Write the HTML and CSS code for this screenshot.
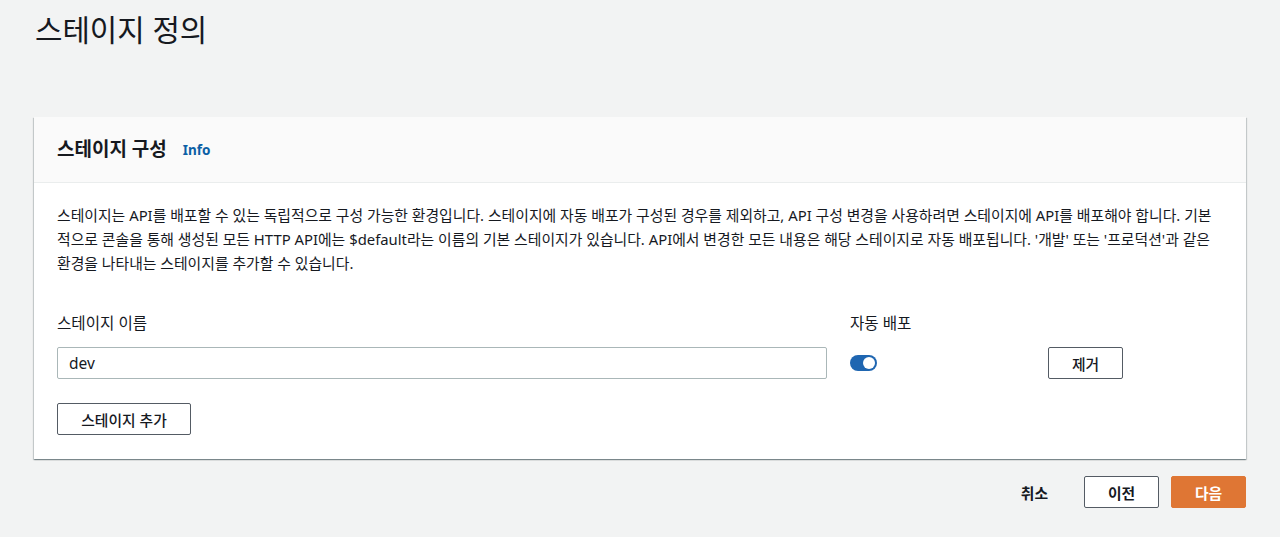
FILE: index.html
```html
<!DOCTYPE html>
<html lang="ko">
<head>
<meta charset="utf-8">
<title>스테이지 정의</title>
<link rel="stylesheet" href="styles.css">
</head>
<body>
<main class="page">
  <h1 class="page-title">스테이지 정의</h1>
  <section class="card">
    <header class="card-header">
      <h2 class="card-title">스테이지 구성</h2>
      <a class="info-link" href="#">Info</a>
    </header>
    <div class="card-body">
      <p class="desc">스테이지는 API를 배포할 수 있는 독립적으로 구성 가능한 환경입니다. 스테이지에 자동 배포가 구성된 경우를 제외하고, API 구성 변경을 사용하려면 스테이지에 API를 배포해야 합니다. 기본적으로 콘솔을 통해 생성된 모든 HTTP API에는 $default라는 이름의 기본 스테이지가 있습니다. API에서 변경한 모든 내용은 해당 스테이지로 자동 배포됩니다. '개발' 또는 '프로덕션'과 같은 환경을 나타내는 스테이지를 추가할 수 있습니다.</p>
      <div class="stage-grid">
        <label class="field-label">스테이지 이름</label>
        <label class="field-label">자동 배포</label>
        <span></span>
        <input class="text-input" type="text" value="dev">
        <div class="toggle-cell"><span class="toggle"><span class="knob"></span></span></div>
        <div><button class="btn btn-small">제거</button></div>
      </div>
      <button class="btn btn-add">스테이지 추가</button>
    </div>
  </section>
  <footer class="actions">
    <button class="btn-link">취소</button>
    <button class="btn btn-footer">이전</button>
    <button class="btn btn-primary">다음</button>
  </footer>
</main>
</body>
</html>
```

FILE: styles.css
```css
* { box-sizing: border-box; }
html, body {
  margin: 0;
  background: #f2f3f3;
  color: #16191f;
  font-family: "Noto Sans", "Noto Sans CJK KR", sans-serif;
  font-size: 14px;
}
.page {
  padding: 0 34px;
}
.page-title {
  margin: 0;
  padding-top: 12px;
  font-size: 29.8px;
  line-height: 36px;
  font-weight: 400;
  padding-left: 1px;
}
.card {
  margin-top: 69px;
  background: #fff;
  box-shadow: 0 1px 1px 0 rgba(0,28,36,.3), 1px 1px 1px 0 rgba(0,28,36,.15), -1px 1px 1px 0 rgba(0,28,36,.15);
}
.card-header {
  height: 66px;
  background: #fafafa;
  border-bottom: 1px solid #eaeded;
  display: flex;
  align-items: center;
  padding: 0 23px;
  padding-bottom: 2px;
}
.card-title {
  margin: 0;
  font-size: 19px;
  font-weight: 700;
  line-height: 24px;
}
.info-link {
  margin-left: 16px;
  color: #0b5fa5;
  font-weight: 700;
  font-size: 13.5px;
  text-decoration: none;
  padding-top: 3px;
}
.card-body {
  padding: 20px 23px 24px;
}
.desc {
  margin: 0;
  line-height: 24px;
  font-size: 14.85px;
}
.stage-grid {
  margin-top: 36px;
  display: grid;
  grid-template-columns: 770px 175px auto;
  column-gap: 23px;
  row-gap: 12px;
  align-items: center;
}
.field-label {
  line-height: 24px;
  font-size: 15.6px;
}
.text-input {
  height: 32px;
  width: 770px;
  border: 1px solid #aab7b8;
  border-radius: 2px;
  padding: 0 11px;
  font: inherit;
  font-size: 15.5px;
  color: #16191f;
  background: #fff;
}
.toggle-cell {
  display: flex;
  align-items: center;
}
.toggle {
  display: inline-block;
  width: 27px;
  height: 16px;
  border-radius: 8px;
  background: #1f66b1;
  position: relative;
}
.knob {
  position: absolute;
  right: 2px;
  top: 2px;
  width: 12px;
  height: 12px;
  border-radius: 50%;
  background: #fff;
}
.btn {
  height: 32px;
  border: 1px solid #545b64;
  border-radius: 2px;
  background: #fff;
  color: #16191f;
  font: inherit;
  font-size: 14.8px;
  cursor: pointer;
}
.btn-small {
  width: 75px;
  font-weight: 500;
}
.btn-add {
  margin-top: 24px;
  width: 134px;
  font-weight: 500;
  display: block;
}
.actions {
  margin-top: 17px;
  display: flex;
  justify-content: flex-end;
  align-items: center;
}
.btn-link {
  height: 32px;
  border: none;
  background: none;
  font: inherit;
  font-weight: 700;
  font-size: 14.8px;
  color: #16191f;
  padding: 0 20px;
  margin-right: 16px;
}
.btn-footer {
  width: 75px;
  font-weight: 700;
}
.btn-primary {
  width: 75px;
  margin-left: 12px;
  font-weight: 700;
  background: #df7634;
  border-color: #df7634;
  color: #fff;
}
```
